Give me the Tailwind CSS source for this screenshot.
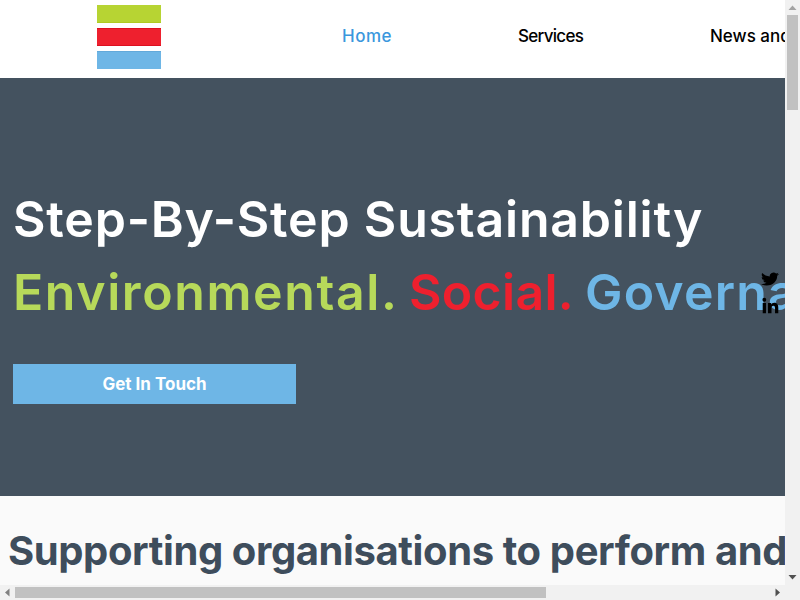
<!DOCTYPE html>
<html lang="en">
<head>
  <meta charset="UTF-8" />
  <title>Step-By-Step Sustainability</title>
  <script src="https://cdn.jsdelivr.net/npm/@tailwindcss/browser@4"></script>
</head>
<body class="w-[800px] h-[600px] overflow-hidden bg-white font-['Inter',sans-serif]">
  <div class="flex flex-col h-[600px]">
    <div class="flex h-[585px]">
      <!-- Page -->
      <div class="relative w-[785px] h-[585px] overflow-hidden">
        <!-- Navbar -->
        <header class="flex items-start h-[78px] bg-white">
          <div class="flex flex-col shrink-0 gap-[5px] w-[64px] mt-[5px] ml-[97px]">
            <div class="h-[18px] bg-[#b7d433] border-b border-[#aecb22]"></div>
            <div class="h-[18px] bg-[#ee202e] border-y border-[#dc1020]"></div>
            <div class="h-[18px] bg-[#6eb6e6] border-t border-[#62a9da]"></div>
          </div>
          <nav class="flex shrink-0 mt-[28px] text-[17px] leading-[17px] font-medium text-black whitespace-nowrap">
            <a class="ml-[181px] w-[176px] tracking-[0.5px] text-[#3a97dd]">Home</a>
            <a class="w-[192px] tracking-[-0.7px]">Services</a>
            <a>News and Insights</a>
          </nav>
        </header>

        <!-- Hero -->
        <section class="flex flex-col h-[418px] pl-[13px] bg-[#44525f] whitespace-nowrap">
          <h1 class="mt-[109px] text-[50px] leading-[64px] font-semibold tracking-[0.8px] text-white">Step-By-Step Sustainability</h1>
          <p class="flex mt-[9px] text-[50px] leading-[64px] font-semibold">
            <span class="shrink-0 w-[396px] tracking-[1.6px] text-[#b7d95a]">Environmental.</span>
            <span class="shrink-0 w-[176px] tracking-[0.3px] text-[#ee202e]">Social.</span>
            <span class="shrink-0 tracking-[1.2px] text-[#6eb6e6]">Governance.</span>
          </p>
          <a class="flex items-center justify-center mt-[40px] pt-[1px] w-[283px] h-[40px] bg-[#6eb6e6] text-[17px] font-bold text-white">Get In Touch</a>
        </section>

        <!-- Social icons -->
        <div class="absolute top-[271px] left-[761px] flex flex-col items-center w-[18px] gap-[10px] text-black">
          <svg class="w-[18px] h-[16px]" viewBox="0 0 24 24" fill="currentColor" preserveAspectRatio="none">
            <path d="M23.95 4.57a10 10 0 0 1-2.82.77 4.96 4.96 0 0 0 2.16-2.72c-.95.55-2 .96-3.12 1.19a4.92 4.92 0 0 0-8.38 4.48C7.69 8.1 4.07 6.13 1.64 3.16a4.82 4.82 0 0 0-.66 2.48c0 1.71.87 3.21 2.19 4.1a4.9 4.9 0 0 1-2.23-.62v.06a4.92 4.92 0 0 0 3.95 4.83 5 5 0 0 1-2.21.08 4.94 4.94 0 0 0 4.6 3.42A9.87 9.87 0 0 1 0 19.54a14 14 0 0 0 7.56 2.21c9.05 0 14-7.5 14-13.98 0-.21 0-.42-.02-.63a9.94 9.94 0 0 0 2.41-2.57z"/>
          </svg>
          <svg class="w-[17px] h-[17px]" viewBox="0 0 24 24" fill="currentColor">
            <path d="M1 8.500h4.600V23H1zM3.300 1.200a2.700 2.700 0 1 1 0 5.400 2.700 2.700 0 0 1 0-5.400zM8.500 8.500h4.400v2h.1c.6-1.200 2.100-2.400 4.400-2.400 4.700 0 5.600 3.100 5.600 7.100V23h-4.600v-6.900c0-1.700 0-3.800-2.300-3.800s-2.700 1.800-2.700 3.700v7H8.500z"/>
          </svg>
        </div>

        <!-- Supporting section -->
        <section class="h-[89px] pl-[8px] bg-[#fafafa] whitespace-nowrap">
          <h2 class="pt-[31px] text-[40px] leading-[48px] font-bold tracking-[-0.4px] text-[#3e4d5c]">Supporting organisations to perform and thrive</h2>
        </section>
      </div>

      <!-- Vertical scrollbar -->
      <div class="flex flex-col items-center w-[15px] bg-[#f1f1f1]">
        <svg class="w-[15px] h-[15px]" viewBox="0 0 15 15" fill="#a3a3a3"><path d="M3.500 10h8l-4-4.500z"/></svg>
        <div class="w-[11px] h-[95px] bg-[#c1c1c1]"></div>
        <svg class="w-[15px] h-[15px] mt-auto" viewBox="0 0 15 15" fill="#505050"><path d="M3.500 5h8l-4 4.500z"/></svg>
      </div>
    </div>

    <!-- Horizontal scrollbar -->
    <div class="flex items-center h-[15px] bg-[#f1f1f1]">
      <svg class="shrink-0 w-[15px] h-[15px]" viewBox="0 0 15 15" fill="#808080"><path d="M9.500 3.500v8l-4.500-4z"/></svg>
      <div class="w-[531px] h-[11px] bg-[#c1c1c1]"></div>
      <svg class="shrink-0 w-[15px] h-[15px] ml-auto mr-[15px]" viewBox="0 0 15 15" fill="#505050"><path d="M5.500 3.500v8l4.500-4z"/></svg>
    </div>
  </div>
</body>
</html>
